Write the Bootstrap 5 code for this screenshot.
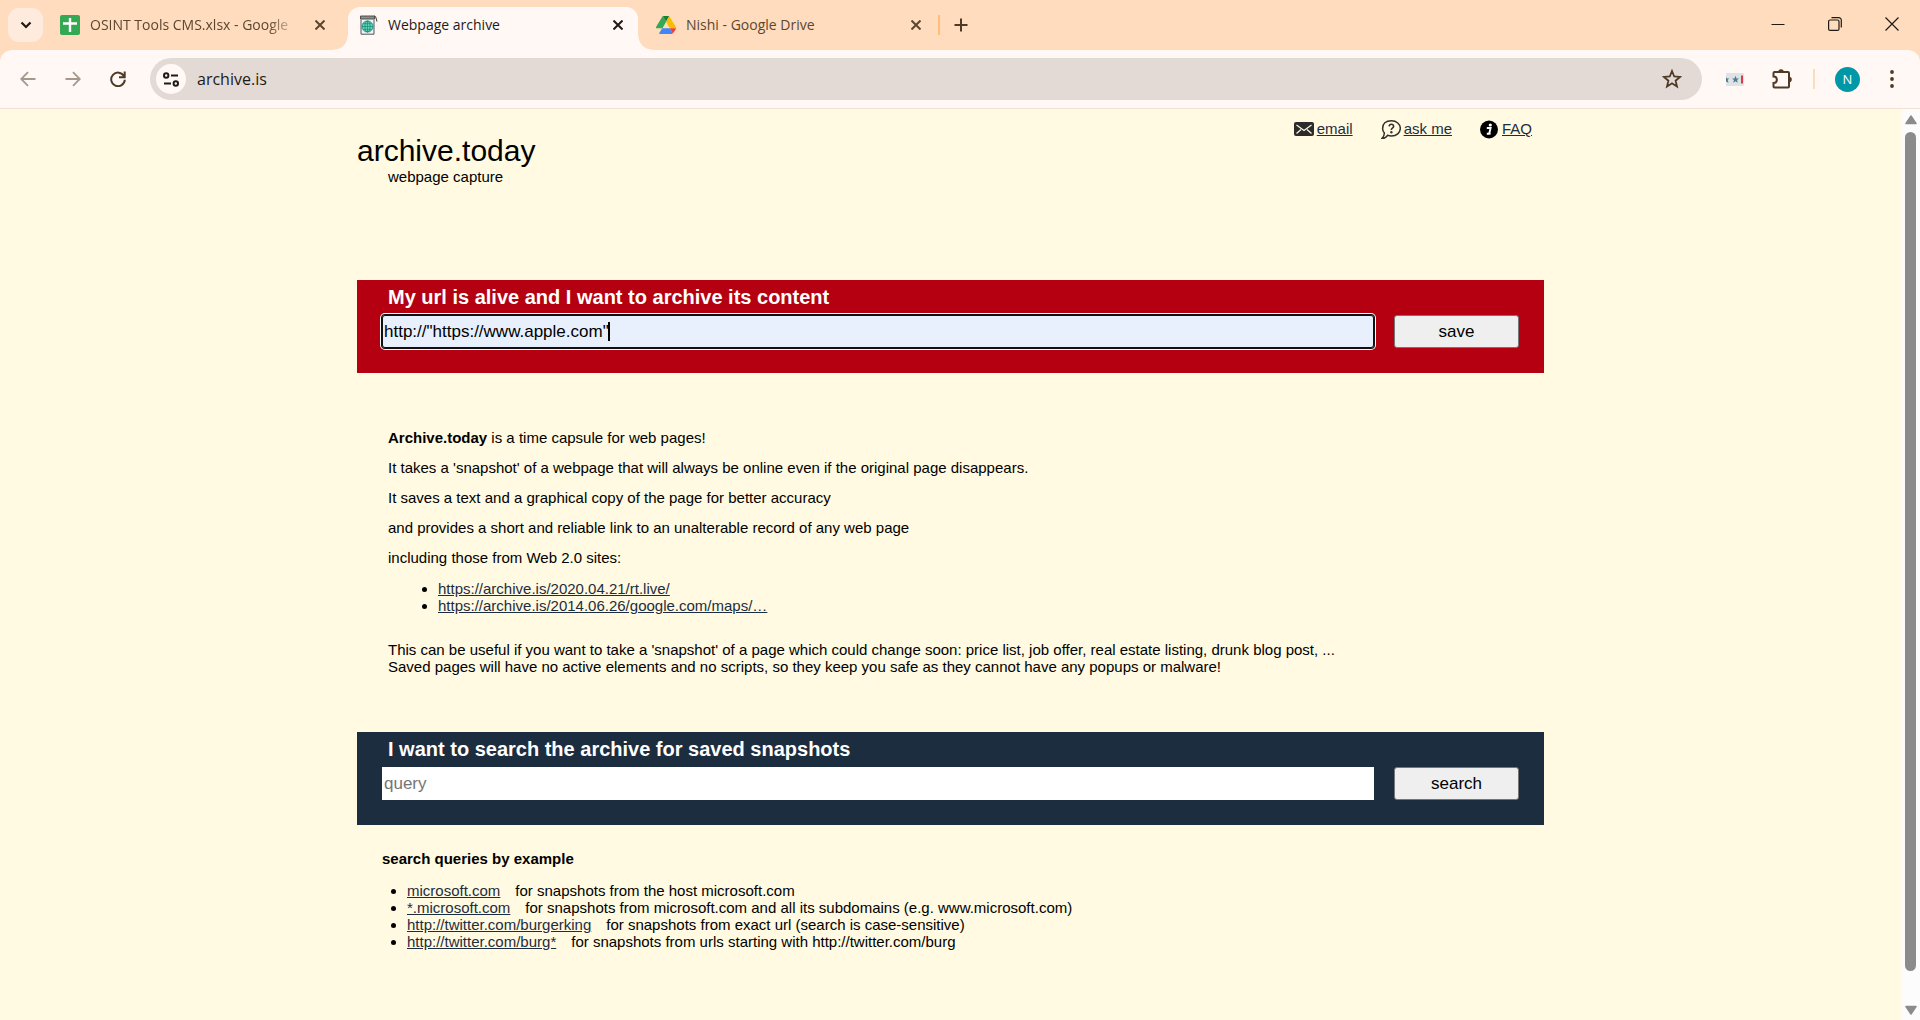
<!DOCTYPE html>
<html lang="en">
<head>
<meta charset="utf-8">
<meta name="viewport" content="width=device-width, initial-scale=1">
<title>Webpage archive</title>
<link rel="stylesheet" href="https://cdn.jsdelivr.net/npm/bootstrap@5.3.0/dist/css/bootstrap.min.css">
<style>
  body { font-family: "Liberation Sans", Arial, sans-serif; font-size: 15px; line-height: 17px; color: #000; background: #fffae1; }
  svg { display: block; flex: none; }
  button { color: inherit; }

  /* browser chrome */
  .chrome-ui { font-family: "Open Sans", "Noto Sans", sans-serif; color: #4f3a26; background: #fedcbd; }
  .tab-strip { height: 50px; padding-left: 8px; }
  .plain-btn { border: 0; background: none; padding: 0; display: flex; align-items: center; justify-content: center; flex: none; }
  .tab-menu { width: 35px; height: 34px; border-radius: 11px; background: #ffeade; color: #1f1a15; margin: 8px 7px 0 0; }
  .browser-tab { width: 290px; height: 43px; margin-top: 7px; padding: 0 12px 7px 10px; gap: 10px; font-size: 14px; line-height: 20px; color: #5c4630; }
  .browser-tab.current { background: #fff8f5; color: #1f1a15; border-radius: 12px 12px 0 0; position: relative; }
  .browser-tab.current::before, .browser-tab.current::after { content: ""; position: absolute; bottom: 0; width: 14px; height: 14px; }
  .browser-tab.current::before { left: -14px; background: radial-gradient(circle at 0 0, #fedcbd 13px, #fff8f5 14px); }
  .browser-tab.current::after { right: -14px; background: radial-gradient(circle at 100% 0, #fedcbd 13px, #fff8f5 14px); }
  .tab-name { flex: 1; min-width: 0; white-space: nowrap; }
  .tab-name.faded { -webkit-mask-image: linear-gradient(to right, #000 84%, transparent 98%); mask-image: linear-gradient(to right, #000 84%, transparent 98%); }
  .tab-close { width: 16px; height: 16px; }
  .tab-rule { width: 2px; height: 20px; background: #ffbd78; margin: 15px 10px 0 2px; }
  .tab-new { width: 22px; height: 36px; margin-top: 7px; }
  .win-btn { width: 57px; height: 48px; color: #1f1a15; }
  .tool-bar { height: 59px; background: #fff8f5; border-radius: 12px 12px 0 0; border-bottom: 1px solid #f3e0d5; padding: 8px 16px; gap: 20px; }
  .tool-group { gap: 21px; }
  .nav-btn { width: 24px; height: 42px; }
  .nav-btn.idle { opacity: .5; }
  .omnibox { height: 42px; border-radius: 21px; background: #e3dad5; padding: 0 18px 0 6px; }
  .site-btn { width: 30px; height: 30px; border-radius: 50%; background: #fff8f5; color: #1f1a15; }
  .address { border: 0; outline: 0; background: none; font-size: 16px; line-height: 22px; color: #1f1a15; padding: 0 0 0 11px; min-width: 0; }
  .ext-group { gap: 20px; padding-left: 4px; }
  .ext-btn { width: 25px; height: 25px; justify-content: flex-start; }
  .bar-rule { width: 2px; height: 20px; background: #fcdcc0; }
  .avatar { width: 25px; height: 25px; border-radius: 50%; background: #0097a7; color: #fff; font-size: 13px; line-height: 25px; }

  /* page */
  .scroll-rail { width: 19px; background: #fcfcfc; padding: 6px 0 5px; }
  .scroll-thumb { width: 11px; border-radius: 6px; background: #8b8b8b; margin: 7px 0 34px; }
  .site { max-width: 1187px; }
  .site a { color: #1d2d40; text-decoration: underline; }
  .site p { margin: 0 0 13px; }
  .site ul { margin: 0; }
  .site-head { padding: 11px 12px 0 0; margin-bottom: 95px; }
  .brand-name { font-size: 30px; line-height: 34px; margin: 14px 0 0; font-weight: 400; }
  .indent { padding-left: 31px; }
  .help-nav { gap: 28px; }
  .help-nav a { text-decoration: none; display: flex; gap: 3px; }
  .help-nav a span { text-decoration: underline; }
  .form-band { padding: 0 25px 25px; color: #fff; }
  .band-save { background: #b40010; }
  .band-find { background: #1d2d40; }
  .band-title { display: block; font-size: 20px; line-height: 35px; font-weight: 700; padding: 0 0 0 6px; margin: 0; }
  .band-row { gap: 20px; position: relative; }
  .band-input { height: 33px; border: 0; border-radius: 0; padding: 0 2px; font-size: 17px; line-height: 20px; min-width: 0; color: #000; background: #fff; outline: 0; }
  .band-input::placeholder { color: #757575; opacity: 1; }
  .band-input.active-field { background: #e8f0fe; border-radius: 3px; box-shadow: 0 0 0 1px #101010, inset 0 0 0 1px #101010, 0 0 0 2px #fff; }
  .caret { position: absolute; left: 226px; top: 7px; width: 2px; height: 19px; background: #000; }
  .band-btn { width: 125px; height: 33px; border: 1px solid #767676; border-radius: 3px; background: #efefef; color: #000; font-size: 17px; line-height: 20px; padding: 0; }
  .about { margin: 56px 0 57px; }
  .about p.closing { margin: 0; padding-top: 27px; }
  .about ul { padding: 1px 0 0 50px; }
  .queries { padding: 25px 25px 0; }
  .queries h2 { font-size: 15px; line-height: 17px; font-weight: 700; margin: 0 0 15px; }
  .queries ul { padding-left: 25px; }
  .queries li span { margin-left: 15px; }
</style>
<script src="https://cdn.jsdelivr.net/npm/bootstrap@5.3.0/dist/js/bootstrap.bundle.min.js"></script>
</head>
<body class="vh-100 d-flex flex-column overflow-hidden">

<header class="chrome-ui flex-shrink-0">
  <div class="tab-strip d-flex align-items-start">
    <button class="plain-btn tab-menu" type="button" aria-label="Search tabs">
      <svg width="12" height="8" viewBox="0 0 12 8" fill="none" stroke="currentColor" stroke-width="2.2"><path d="M1.5 1.5 6 6l4.500-4.500"/></svg>
    </button>
    <div class="d-flex gap-2">
      <div class="browser-tab d-flex align-items-center">
        <svg width="20" height="20" viewBox="0 0 20 20"><rect width="20" height="20" rx="2" fill="#34a853"/><path d="M10 3v14M3 8.500h14" stroke="#fff" stroke-width="2.400"/></svg>
        <span class="tab-name faded">OSINT Tools CMS.xlsx - Google</span>
        <button class="plain-btn tab-close" type="button" aria-label="Close tab"><svg width="10" height="10" viewBox="0 0 10 10" stroke="currentColor" stroke-width="2"><path d="M.5.5l9 9M9.500.5l-9 9"/></svg></button>
      </div>
      <div class="browser-tab current d-flex align-items-center">
        <svg width="20" height="20" viewBox="0 0 20 20" fill="none">
          <path d="M3 4.500v14.700h13V4.500" fill="#eef3f3" stroke="#555" stroke-width="1"/>
          <path d="M2.500 1h14v3h-14z" fill="#8f8f8f" stroke="#444" stroke-width=".9"/>
          <path d="M16.500.8q1.600.6 1.700 3l.8 2.700" stroke="#333" stroke-width="1"/>
          <circle cx="9.500" cy="11.500" r="5.500" fill="#5fdcae" stroke="#1f7f86" stroke-width=".9"/>
          <ellipse cx="9.500" cy="11.500" rx="2.600" ry="5.500" stroke="#1f7f86" stroke-width=".8"/><path d="M4 11.500h11M9.500 6v11M5.200 8.700h8.600M5.200 14.300h8.600" stroke="#1f7f86" stroke-width=".7"/>
        </svg>
        <span class="tab-name">Webpage archive</span>
        <button class="plain-btn tab-close" type="button" aria-label="Close tab"><svg width="10" height="10" viewBox="0 0 10 10" stroke="currentColor" stroke-width="2"><path d="M.5.5l9 9M9.500.5l-9 9"/></svg></button>
      </div>
      <div class="browser-tab d-flex align-items-center">
        <svg width="20" height="18" viewBox="0 0 87 78"><path fill="#4285f4" d="M0 53h27l-14 23c4 2 5 2 9 2h42c4 0 6 0 9-2L60 53z"/><path fill="#34a853" d="M44 25 30 1c-2 1-3 2-4 4L2 44c-2 3-2 6-2 9h28z"/><path fill="#188038" d="M44 25 57 1c-2-1-4-1-6-1H36c-2 0-4 0-6 1z"/><path fill="#fbbc04" d="M73 26 61 5c-1-2-2-3-4-4L44 25l16 28h27c0-3-1-6-2-9z"/><path fill="#ea4335" d="m73 76 3-3 9-14c1-2 2-3 2-6H60z"/></svg>
        <span class="tab-name">Nishi - Google Drive</span>
        <button class="plain-btn tab-close" type="button" aria-label="Close tab"><svg width="10" height="10" viewBox="0 0 10 10" stroke="currentColor" stroke-width="2"><path d="M.5.5l9 9M9.500.5l-9 9"/></svg></button>
      </div>
    </div>
    <div class="tab-rule"></div>
    <button class="plain-btn tab-new" type="button" aria-label="New tab"><svg width="14" height="14" viewBox="0 0 14 14" stroke="currentColor" stroke-width="2"><path d="M7 .5v13M.5 7h13"/></svg></button>
    <div class="d-flex ms-auto">
      <button class="plain-btn win-btn" type="button" aria-label="Minimize"><svg width="14" height="14" viewBox="0 0 14 14"><path d="M.5 7.500h13" stroke="currentColor" stroke-width="1"/></svg></button>
      <button class="plain-btn win-btn" type="button" aria-label="Restore"><svg width="14" height="14" viewBox="0 0 14 14" fill="none" stroke="currentColor" stroke-width="1.200"><rect x=".6" y="3" width="10.400" height="10.400" rx="1.500"/><path d="M3.500.7h7.300a2.500 2.500 0 0 1 2.500 2.500v7.300"/></svg></button>
      <button class="plain-btn win-btn" type="button" aria-label="Close window"><svg width="14" height="14" viewBox="0 0 14 14" stroke="currentColor" stroke-width="1.200"><path d="M.5.5l13 13M13.500.5l-13 13"/></svg></button>
    </div>
  </div>

  <div class="tool-bar d-flex align-items-center">
    <div class="tool-group d-flex">
      <button class="plain-btn nav-btn idle" type="button" aria-label="Back"><svg width="16" height="16" viewBox="0 0 16 16" fill="none" stroke="currentColor" stroke-width="1.800"><path d="M15.500 8H1.500M8 1.200 1.200 8 8 14.800"/></svg></button>
      <button class="plain-btn nav-btn idle" type="button" aria-label="Forward"><svg width="16" height="16" viewBox="0 0 16 16" fill="none" stroke="currentColor" stroke-width="1.800"><path d="M.5 8h14M8 1.200 14.800 8 8 14.800"/></svg></button>
      <button class="plain-btn nav-btn" type="button" aria-label="Reload"><svg width="16" height="16" viewBox="0 0 16 16" fill="none" stroke="currentColor" stroke-width="2"><path d="M14 5.200A6.800 6.800 0 1 0 14.800 8.800M14.700.5v5.700H9"/></svg></button>
    </div>
    <div class="omnibox d-flex align-items-center flex-grow-1">
      <button class="plain-btn site-btn" type="button" aria-label="Site information"><svg width="16" height="15" viewBox="0 0 16 15" fill="none" stroke="currentColor" stroke-width="2"><circle cx="3.200" cy="3.500" r="2.200"/><path d="M8 3.500h7M1 11.500h7"/><circle cx="12.800" cy="11.500" r="2.200"/></svg></button>
      <input class="address flex-grow-1" type="text" value="archive.is" aria-label="Address">
      <button class="plain-btn nav-btn" type="button" aria-label="Bookmark"><svg width="20" height="20" viewBox="0 0 20 20" fill="none" stroke="currentColor" stroke-width="1.800"><path d="m10 2 2.200 5.500 5.900.4-4.500 3.800 1.400 5.800-5-3.200-5 3.200 1.400-5.800L1.900 7.900l5.900-.4z"/></svg></button>
    </div>
    <div class="ext-group d-flex align-items-center">
      <button class="plain-btn ext-btn" type="button" aria-label="Extension"><svg width="18" height="13" viewBox="0 0 18 13"><rect width="18" height="13" rx="1" fill="#dde3e6"/><path d="m9.500 2.800 1 2.600h2.500l-2 1.700.8 2.700-2.300-1.600-2.300 1.600.8-2.700-2-1.700h2.500zM0 4l1 1.400h2.300L1.700 7.100l.8 2.700L0 8.500z" fill="#557985"/><path d="M15 2.500h2v8h-2z" fill="#d43c49"/></svg></button>
      <button class="plain-btn" type="button" aria-label="Extensions"><svg width="22" height="22" viewBox="0 0 22 22" fill="none" stroke="currentColor" stroke-width="2"><path d="M3.500 4H17a1 1 0 0 1 1 1v13.500a1 1 0 0 1-1 1H3.500a1 1 0 0 1-1-1V15c4.500 0 4.500-6.500 0-6.500V5a1 1 0 0 1 1-1z"/><path d="M7.200 4a2.800 2.800 0 0 1 5.600 0zM18 8.800a2.800 2.800 0 0 1 0 5.600z" fill="currentColor" stroke="none"/></svg></button>
      <div class="bar-rule"></div>
      <button class="plain-btn avatar" type="button" aria-label="Profile">N</button>
      <button class="plain-btn nav-btn" type="button" aria-label="Menu"><svg width="4" height="18" viewBox="0 0 4 18" fill="currentColor"><circle cx="2" cy="2" r="1.900"/><circle cx="2" cy="9" r="1.900"/><circle cx="2" cy="16" r="1.900"/></svg></button>
    </div>
  </div>
</header>

<div class="d-flex flex-grow-1 overflow-hidden">
  <div class="flex-grow-1">
    <main class="site mx-auto">
      <div class="site-head d-flex justify-content-between align-items-start">
        <div>
          <h1 class="brand-name">archive.today</h1>
          <div class="indent">webpage capture</div>
        </div>
        <nav class="help-nav d-flex">
          <a href="#"><svg width="20" height="17" viewBox="0 0 20 17"><rect y="2" width="20" height="14" rx="2" fill="#2b2b2b"/><path d="m2.500 5 7.500 5.500L17.500 5M2.500 13.500 7 9.500M17.500 13.500 13 9.500" fill="none" stroke="#fffae1" stroke-width="1.200"/></svg><span>email</span></a>
          <a href="#"><svg width="20" height="20" viewBox="0 0 20 20" fill="none" stroke="#33302b" stroke-width="1.500"><path d="M10.500.8c5 0 8.800 3.200 8.800 7.600s-3.800 7.600-8.800 7.600q-2.200 0-4-.7Q4.500 18.500 1 18.300 3.200 16.500 3.400 13 1.600 11 1.600 8.400 1.600.8 10.500.8z"/><path d="M8.200 6.300q.2-2 2.200-2t2.200 1.900q0 1.200-1.200 2t-1 1.800" stroke-width="1.600"/><circle cx="10.400" cy="12.300" r=".5" fill="#33302b"/></svg><span>ask me</span></a>
          <a href="#"><svg width="19" height="19" viewBox="0 0 19 19"><circle cx="9" cy="9.500" r="9" fill="#000"/><circle cx="10.300" cy="5" r="1.600" fill="#fff"/><path d="M6.800 8h3.800l-1.400 5.600h1.500M6.800 13.800h3" fill="none" stroke="#fff" stroke-width="1.900"/></svg><span>FAQ</span></a>
        </nav>
      </div>

      <form class="form-band band-save">
        <label class="band-title" for="url">My url is alive and I want to archive its content</label>
        <div class="band-row d-flex">
          <input class="band-input active-field flex-grow-1" id="url" type="text" value='http://"https://www.apple.com"'>
          <span class="caret"></span>
          <button class="band-btn" type="submit">save</button>
        </div>
      </form>

      <section class="about indent">
        <p><b>Archive.today</b> is a time capsule for web pages!</p>
        <p>It takes a 'snapshot' of a webpage that will always be online even if the original page disappears.</p>
        <p>It saves a text and a graphical copy of the page for better accuracy</p>
        <p>and provides a short and reliable link to an unalterable record of any web page</p>
        <p>including those from Web 2.0 sites:</p>
        <ul>
          <li><a href="#">https://archive.is/2020.04.21/rt.live/</a></li>
          <li><a href="#">https://archive.is/2014.06.26/google.com/maps/…</a></li>
        </ul>
        <p class="closing">This can be useful if you want to take a 'snapshot' of a page which could change soon: price list, job offer, real estate listing, drunk blog post, ...<br>Saved pages will have no active elements and no scripts, so they keep you safe as they cannot have any popups or malware!</p>
      </section>

      <form class="form-band band-find">
        <label class="band-title" for="query">I want to search the archive for saved snapshots</label>
        <div class="band-row d-flex">
          <input class="band-input flex-grow-1" id="query" type="text" placeholder="query">
          <button class="band-btn" type="submit">search</button>
        </div>
      </form>

      <section class="queries">
        <h2>search queries by example</h2>
        <ul>
          <li><a href="#">microsoft.com</a><span>for snapshots from the host microsoft.com</span></li>
          <li><a href="#">*.microsoft.com</a><span>for snapshots from microsoft.com and all its subdomains (e.g. www.microsoft.com)</span></li>
          <li><a href="#">http://twitter.com/burgerking</a><span>for snapshots from exact url (search is case-sensitive)</span></li>
          <li><a href="#">http://twitter.com/burg*</a><span>for snapshots from urls starting with http://twitter.com/burg</span></li>
        </ul>
      </section>
    </main>
  </div>
  <div class="scroll-rail d-flex flex-column align-items-center flex-shrink-0" aria-hidden="true">
    <svg width="12" height="10" viewBox="0 0 12 10"><path d="M6 1 11 8.500H1z" fill="#8b8b8b" stroke="#8b8b8b" stroke-width="1.500" stroke-linejoin="round"/></svg>
    <div class="scroll-thumb flex-grow-1"></div>
    <svg width="12" height="10" viewBox="0 0 12 10"><path d="M6 9 1 1.500h10z" fill="#8b8b8b" stroke="#8b8b8b" stroke-width="1.500" stroke-linejoin="round"/></svg>
  </div>
</div>
</body>
</html>
